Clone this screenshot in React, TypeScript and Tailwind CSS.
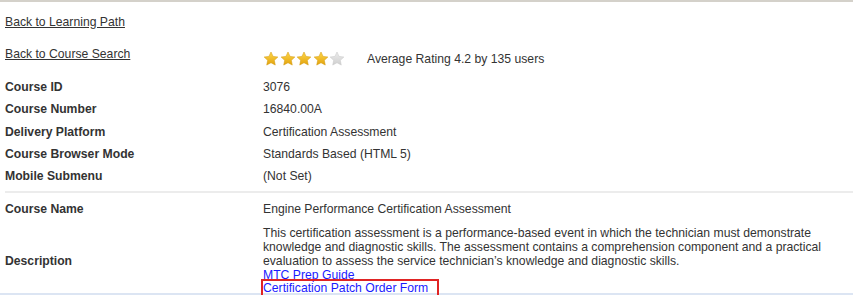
import React from 'react';

// ─── Course detail data ──────────────────────────────────────────────────────

const DETAILS: { label: string; value: string }[] = [
  { label: 'Course ID', value: '3076' },
  { label: 'Course Number', value: '16840.00A' },
  { label: 'Delivery Platform', value: 'Certification Assessment' },
  { label: 'Course Browser Mode', value: 'Standards Based (HTML 5)' },
  { label: 'Mobile Submenu', value: '(Not Set)' },
];

const DESCRIPTION =
  'This certification assessment is a performance-based event in which the technician must demonstrate knowledge and diagnostic skills. The assessment contains a comprehension component and a practical evaluation to assess the service technician\u2019s knowledge and diagnostic skills.';

function Star({ filled, id }: { filled: boolean; id: string }) {
  return (
    <svg width="16" height="16" viewBox="0 0 24 24" aria-hidden="true">
      <defs>
        <linearGradient id={id} x1="0" y1="0" x2="0" y2="1">
          {filled ? (
            <>
              <stop offset="0%" stopColor="#ffd84a" />
              <stop offset="100%" stopColor="#e2a20c" />
            </>
          ) : (
            <>
              <stop offset="0%" stopColor="#ececec" />
              <stop offset="100%" stopColor="#cfcfcf" />
            </>
          )}
        </linearGradient>
      </defs>
      <path
        d="M12 1.5l3.1 6.6 7.2.9-5.3 5 1.4 7.1L12 17.6l-6.4 3.5 1.4-7.1-5.3-5 7.2-.9z"
        fill={`url(#${id})`}
        stroke={filled ? '#d49a10' : '#c8c8c8'}
        strokeWidth="0.8"
        strokeLinejoin="round"
      />
    </svg>
  );
}

function Rating({ value }: { value: number }) {
  return (
    <div className="flex items-center gap-[0.5px]">
      {[0, 1, 2, 3, 4].map((i) => (
        <Star key={i} id={`star-${i}`} filled={i < Math.round(value)} />
      ))}
    </div>
  );
}

export default function App() {
  return (
    <div
      className="relative w-[853px] h-[295px] overflow-hidden bg-white text-[12.2px] text-[#333]"
      style={{ fontFamily: '"Liberation Sans", Arial, sans-serif' }}
    >
      {/* top rule */}
      <div className="h-[2px] bg-[#d4d1ca]" />

      <div className="pl-[5px]">
        {/* Back links */}
        <div className="h-[38px] flex items-center">
          <a href="#" className="underline text-[#333] leading-[14px] pt-[1px]">Back to Learning Path</a>
        </div>

        <div className="grid grid-cols-[258px_1fr] h-[36px]">
          <div className="pt-[7px] leading-[14px]">
            <a href="#" className="underline text-[#333]">Back to Course Search</a>
          </div>
          <div className="flex items-center pt-[2px]">
            <Rating value={4.2} />
            <span className="ml-[22px] leading-[14px]">Average Rating 4.2 by 135 users</span>
          </div>
        </div>

        {DETAILS.map((d) => (
          <div key={d.label} className="grid grid-cols-[258px_1fr] h-[22.25px] items-center leading-[14px]">
            <span className="font-bold">{d.label}</span>
            <span>{d.value}</span>
          </div>
        ))}

        {/* section divider */}
        <div className="mt-[4px] h-[2px] bg-[#ececec]" />

        <div className="grid grid-cols-[258px_1fr] h-[32px] items-center leading-[14px]">
          <span className="font-bold">Course Name</span>
          <span>Engine Performance Certification Assessment</span>
        </div>

        <div className="mt-[2px] grid grid-cols-[258px_1fr] items-center leading-[13.75px]">
          <span className="font-bold">Description</span>
          <div className="pr-[20px]">
            <p>{DESCRIPTION}</p>
            <a href="#" className="block w-fit underline text-[#1a1aff]">MTC Prep Guide</a>
            <a href="#" className="block w-fit underline text-[#1a1aff]">Certification Patch Order Form</a>
          </div>
        </div>
      </div>

      {/* bottom rule of the panel */}
      <div className="absolute left-0 right-0 top-[293px] h-[2px] bg-[#dce5f3]" />

      {/* red highlight annotation */}
      <div className="absolute left-[261px] top-[279px] w-[178px] h-[24px] border-2 border-[#e02424]" />
    </div>
  );
}
